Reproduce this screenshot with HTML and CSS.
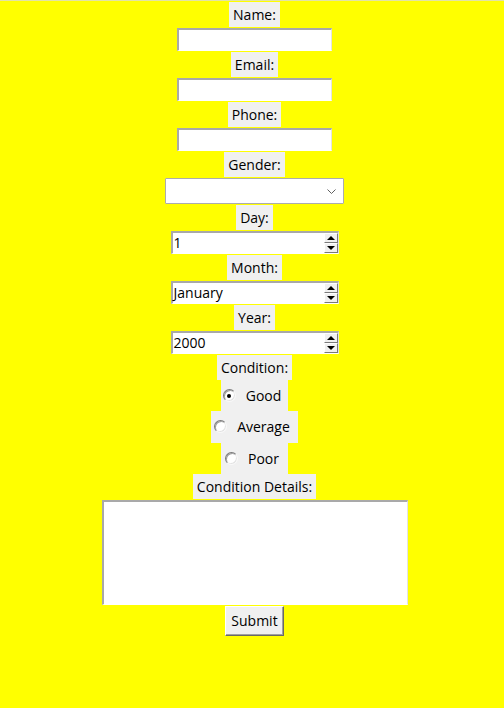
FILE: index.html
```html
<!DOCTYPE html>
<html lang="en">
<head>
<meta charset="utf-8">
<title>Form</title>
<link rel="stylesheet" href="styles.css">
</head>
<body>
<div class="form">
  <div class="lbl">Name:</div>
  <input class="entry" type="text">
  <div class="lbl">Email:</div>
  <input class="entry" type="text">
  <div class="lbl">Phone:</div>
  <input class="entry" type="text">
  <div class="lbl">Gender:</div>
  <div class="combo">
    <svg class="chev" width="9" height="5" viewBox="0 0 9 5"><path d="M0.5 0.5 L4.5 4.5 L8.5 0.5" fill="none" stroke="#606060" stroke-width="1"/></svg>
  </div>
  <div class="lbl">Day:</div>
  <div class="spin">
    <div class="spin-val">1</div>
    <div class="spin-btns">
      <div class="sbtn"><span class="tri-up"></span></div>
      <div class="sbtn"><span class="tri-down"></span></div>
    </div>
  </div>
  <div class="lbl">Month:</div>
  <div class="spin">
    <div class="spin-val">January</div>
    <div class="spin-btns">
      <div class="sbtn"><span class="tri-up"></span></div>
      <div class="sbtn"><span class="tri-down"></span></div>
    </div>
  </div>
  <div class="lbl">Year:</div>
  <div class="spin">
    <div class="spin-val">2000</div>
    <div class="spin-btns">
      <div class="sbtn"><span class="tri-up"></span></div>
      <div class="sbtn"><span class="tri-down"></span></div>
    </div>
  </div>
  <div class="lbl">Condition:</div>
  <div class="radio"><span class="circle checked"></span>Good</div>
  <div class="radio radio-wide"><span class="circle"></span>Average</div>
  <div class="radio radio-poor"><span class="circle"></span>Poor</div>
  <div class="lbl">Condition Details:</div>
  <textarea class="text"></textarea>
  <button class="btn" type="button">Submit</button>
</div>
</body>
</html>
```

FILE: styles.css
```css
html, body {
  margin: 0;
  padding: 0;
}
body {
  background: #ffff00;
  border-top: 1px solid #e3e3a6;
  font-family: "Open Sans", sans-serif;
  font-size: 14px;
  color: #000;
  height: 707px;
  overflow: hidden;
}
.form {
  display: flex;
  flex-direction: column;
  align-items: center;
  padding: 1px 0 0 5px;
}
.lbl {
  background: #f0f0f0;
  height: 25px;
  line-height: 25px;
  padding: 0 4px;
  white-space: nowrap;
}
.entry {
  display: block;
  width: 155px;
  height: 23px;
  margin: 1px 0;
  padding: 0 2px;
  box-sizing: border-box;
  border-style: solid;
  border-width: 2px 1px 1px 2px;
  border-color: #a9a9a9 #e3e3e3 #ffffff #a9a9a9;
  background: #fff;
  outline: none;
  font: inherit;
}
.combo {
  width: 179px;
  height: 26px;
  margin: 1px 0;
  box-sizing: border-box;
  border: 1px solid #acacac;
  border-radius: 1px;
  background: #fff;
  display: flex;
  align-items: center;
  justify-content: flex-end;
  padding-right: 7px;
}
.chev {
  display: block;
}
.spin {
  width: 168px;
  height: 23px;
  margin: 1px 0;
  box-sizing: border-box;
  border-style: solid;
  border-width: 2px 1px 1px 2px;
  border-color: #a9a9a9 #e3e3e3 #ffffff #a9a9a9;
  background: #fff;
  display: flex;
}
.spin-val {
  flex: 1;
  padding-left: 1px;
  line-height: 19px;
}
.spin-btns {
  width: 14px;
  display: flex;
  flex-direction: column;
}
.sbtn {
  flex: 1;
  background: #f0f0f0;
  border-style: solid;
  border-width: 1px;
  border-color: #ffffff #7a7a7a #7a7a7a #ffffff;
  display: flex;
  align-items: center;
  justify-content: center;
}
.tri-up {
  width: 0;
  height: 0;
  border-left: 4px solid transparent;
  border-right: 4px solid transparent;
  border-bottom: 4px solid #000;
}
.tri-down {
  width: 0;
  height: 0;
  border-left: 4px solid transparent;
  border-right: 4px solid transparent;
  border-top: 4px solid #000;
}
.radio {
  height: 31.33px;
  background: #f0f0f0;
  display: flex;
  align-items: center;
  padding: 0 7px 0 2px;
  white-space: nowrap;
}
.radio-wide {
  padding: 0 8px 0 3px;
}
.radio-poor {
  padding: 0 9px 0 4px;
}
.circle {
  width: 13px;
  height: 13px;
  box-sizing: border-box;
  border-radius: 50%;
  border: 1px solid;
  border-color: #7a7a7a #f8f8f8 #f8f8f8 #7a7a7a;
  box-shadow: inset 1px 1px 0 #a0a0a0, inset -1px -1px 0 #e3e3e3;
  background: #fff;
  margin-right: 10px;
  display: flex;
  align-items: center;
  justify-content: center;
}
.circle.checked::after {
  content: "";
  width: 4px;
  height: 4px;
  border-radius: 50%;
  background: #000;
}
.text {
  display: block;
  width: 306px;
  height: 105px;
  margin: 1px 0;
  box-sizing: border-box;
  border-style: solid;
  border-width: 2px 1px 1px 2px;
  border-color: #a9a9a9 #e3e3e3 #ffffff #a9a9a9;
  background: #fff;
  resize: none;
  outline: none;
  font: inherit;
}
.btn {
  width: 59px;
  height: 30px;
  box-sizing: border-box;
  background: #f0f0f0;
  border-style: solid;
  border-width: 1px;
  border-color: #ffffff #696969 #696969 #ffffff;
  box-shadow: inset -1px -1px 0 #a0a0a0;
  font: inherit;
  color: #000;
  padding: 0;
  line-height: 27px;
}
```
